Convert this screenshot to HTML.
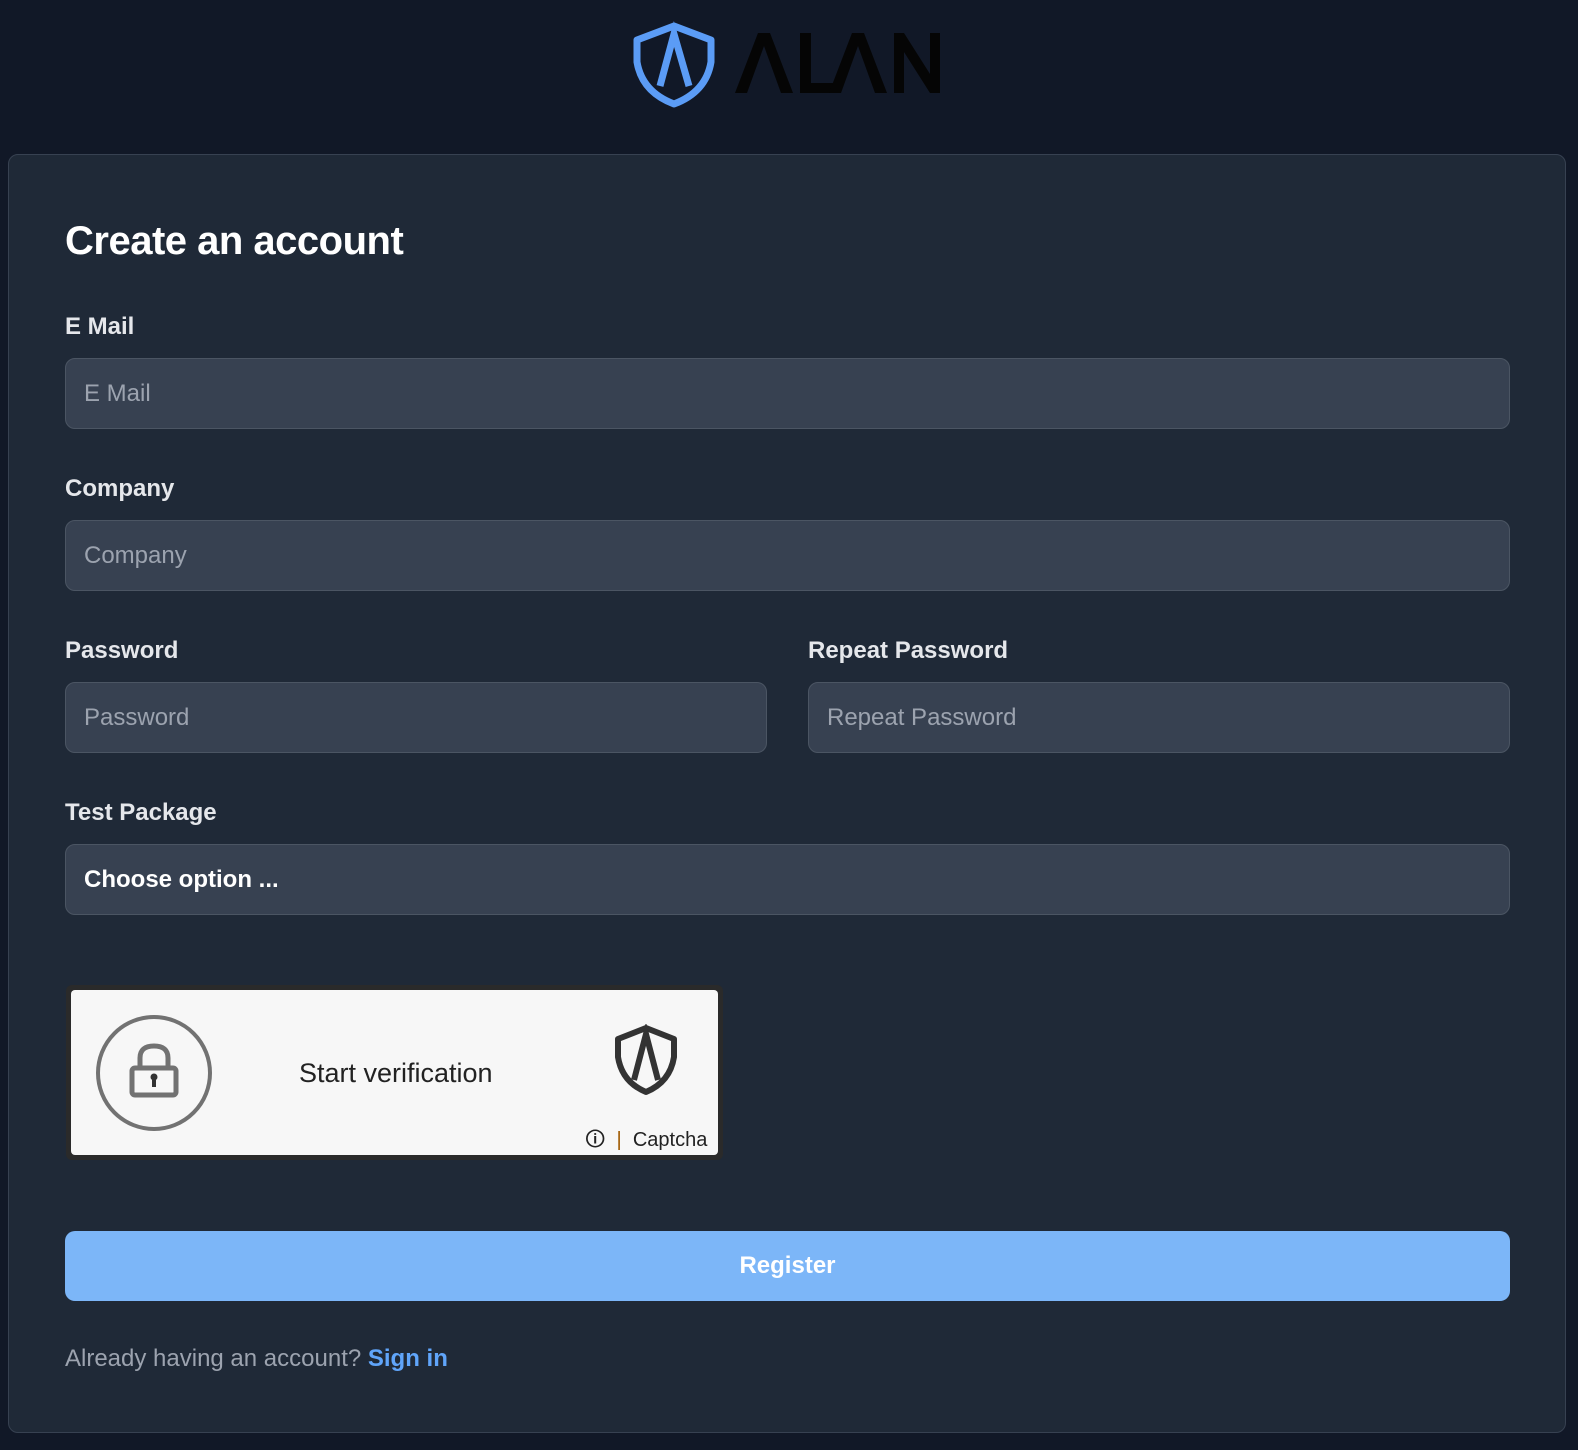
<!DOCTYPE html>
<html><head><meta charset="utf-8"><style>
*{box-sizing:border-box;margin:0;padding:0}
body{width:1578px;height:1450px;background:#111827;font-family:"Liberation Sans",sans-serif;color:#fff;position:relative;overflow:hidden}
.card{position:absolute;left:8px;top:154px;width:1558px;height:1279px;background:#1f2937;border:1px solid #374151;border-radius:10px}
h1{position:absolute;left:56px;top:64px;font-size:40px;font-weight:bold;letter-spacing:-0.5px}
.lbl{position:absolute;font-size:24px;font-weight:bold;color:#e5e7eb}
.inp{position:absolute;height:71px;background:#374151;border:1px solid #4b5563;border-radius:10px;font-size:24px;color:#9ca3af;padding-left:18px;line-height:69px}
.btn{position:absolute;left:56px;top:1076px;width:1445px;height:70px;background:#7cb6f8;border-radius:10px;text-align:center;line-height:70px;font-size:24px;font-weight:bold}
.cap{position:absolute;left:57px;top:830px;width:657px;height:175px;background:#2a2a2a;border-radius:6px;padding:5px}
.capi{width:100%;height:100%;background:#f7f7f7;border-radius:4px;position:relative;color:#222}
</style></head><body>
<svg style="position:absolute;left:630px;top:18px" width="320" height="95" viewBox="630 18 320 95">
<path d="M674 26 L711 40 L711 62 Q706 92 674 104 Q642 92 637 62 L637 40 Z" fill="none" stroke="#5b9cf6" stroke-width="7" stroke-linejoin="round"/>
<path d="M660 86 L674 34 L689 86" fill="none" stroke="#5b9cf6" stroke-width="7"/>
<path d="M735 93 L758 33 L770 33 L793 93 L781 93 L764 46 L747 93 Z" fill="#050505"/>
<rect x="800" y="33" width="11" height="60" fill="#050505"/><rect x="800" y="83" width="36" height="10" fill="#050505"/>
<path d="M829 93 L852 33 L864 33 L887 93 L875 93 L858 46 L841 93 Z" fill="#050505"/>
<path d="M894 33 L904 33 L930 74 L930 33 L940 33 L940 93 L930 93 L904 52 L904 93 L894 93 Z" fill="#050505"/>
</svg>
<div class="card">
<h1>Create an account</h1>
<div class="lbl" style="left:56px;top:158px">E Mail</div>
<div class="inp" style="left:56px;top:203px;width:1445px">E Mail</div>
<div class="lbl" style="left:56px;top:320px">Company</div>
<div class="inp" style="left:56px;top:365px;width:1445px">Company</div>
<div class="lbl" style="left:56px;top:482px">Password</div>
<div class="inp" style="left:56px;top:527px;width:702px">Password</div>
<div class="lbl" style="left:799px;top:482px">Repeat Password</div>
<div class="inp" style="left:799px;top:527px;width:702px">Repeat Password</div>
<div class="lbl" style="left:56px;top:644px">Test Package</div>
<div class="inp" style="left:56px;top:689px;width:1445px;color:#fff;font-weight:bold">Choose option ...</div>
<div class="cap"><div class="capi">
<svg style="position:absolute;left:24px;top:24px" width="120" height="120" viewBox="0 0 120 120">
<circle cx="59" cy="59" r="56" fill="none" stroke="#727272" stroke-width="4"/>
<path d="M45 55 V44 Q45 32 59 32 Q73 32 73 44 V55" fill="none" stroke="#727272" stroke-width="5"/>
<rect x="37" y="54" width="44" height="27" rx="3" fill="none" stroke="#727272" stroke-width="5"/>
<circle cx="59" cy="63" r="3.5" fill="#333"/><rect x="57" y="63" width="4" height="10" fill="#333"/>
</svg>
<div style="position:absolute;left:228px;top:68px;font-size:27px;color:#222">Start verification</div>
<svg style="position:absolute;left:540px;top:34px" width="70" height="72" viewBox="0 0 70 72">
<path d="M35 4 L63 15 L63 33 Q59 58 35 68 Q11 58 7 33 L7 15 Z" fill="none" stroke="#333" stroke-width="6" stroke-linejoin="round"/>
<path d="M23 56 L35 10 L47 56" fill="none" stroke="#333" stroke-width="6"/>
</svg>
<div style="position:absolute;left:514px;top:135px;font-size:20px;color:#222">🛈 &nbsp;<span style="color:#a05a00">|</span>&nbsp; Captcha</div>
</div></div>
<div class="btn">Register</div>
<div style="position:absolute;left:56px;top:1190px;font-size:24px;color:#9ca3af">Already having an account? <b style="color:#60a5fa">Sign in</b></div>
</div>
</body></html>
